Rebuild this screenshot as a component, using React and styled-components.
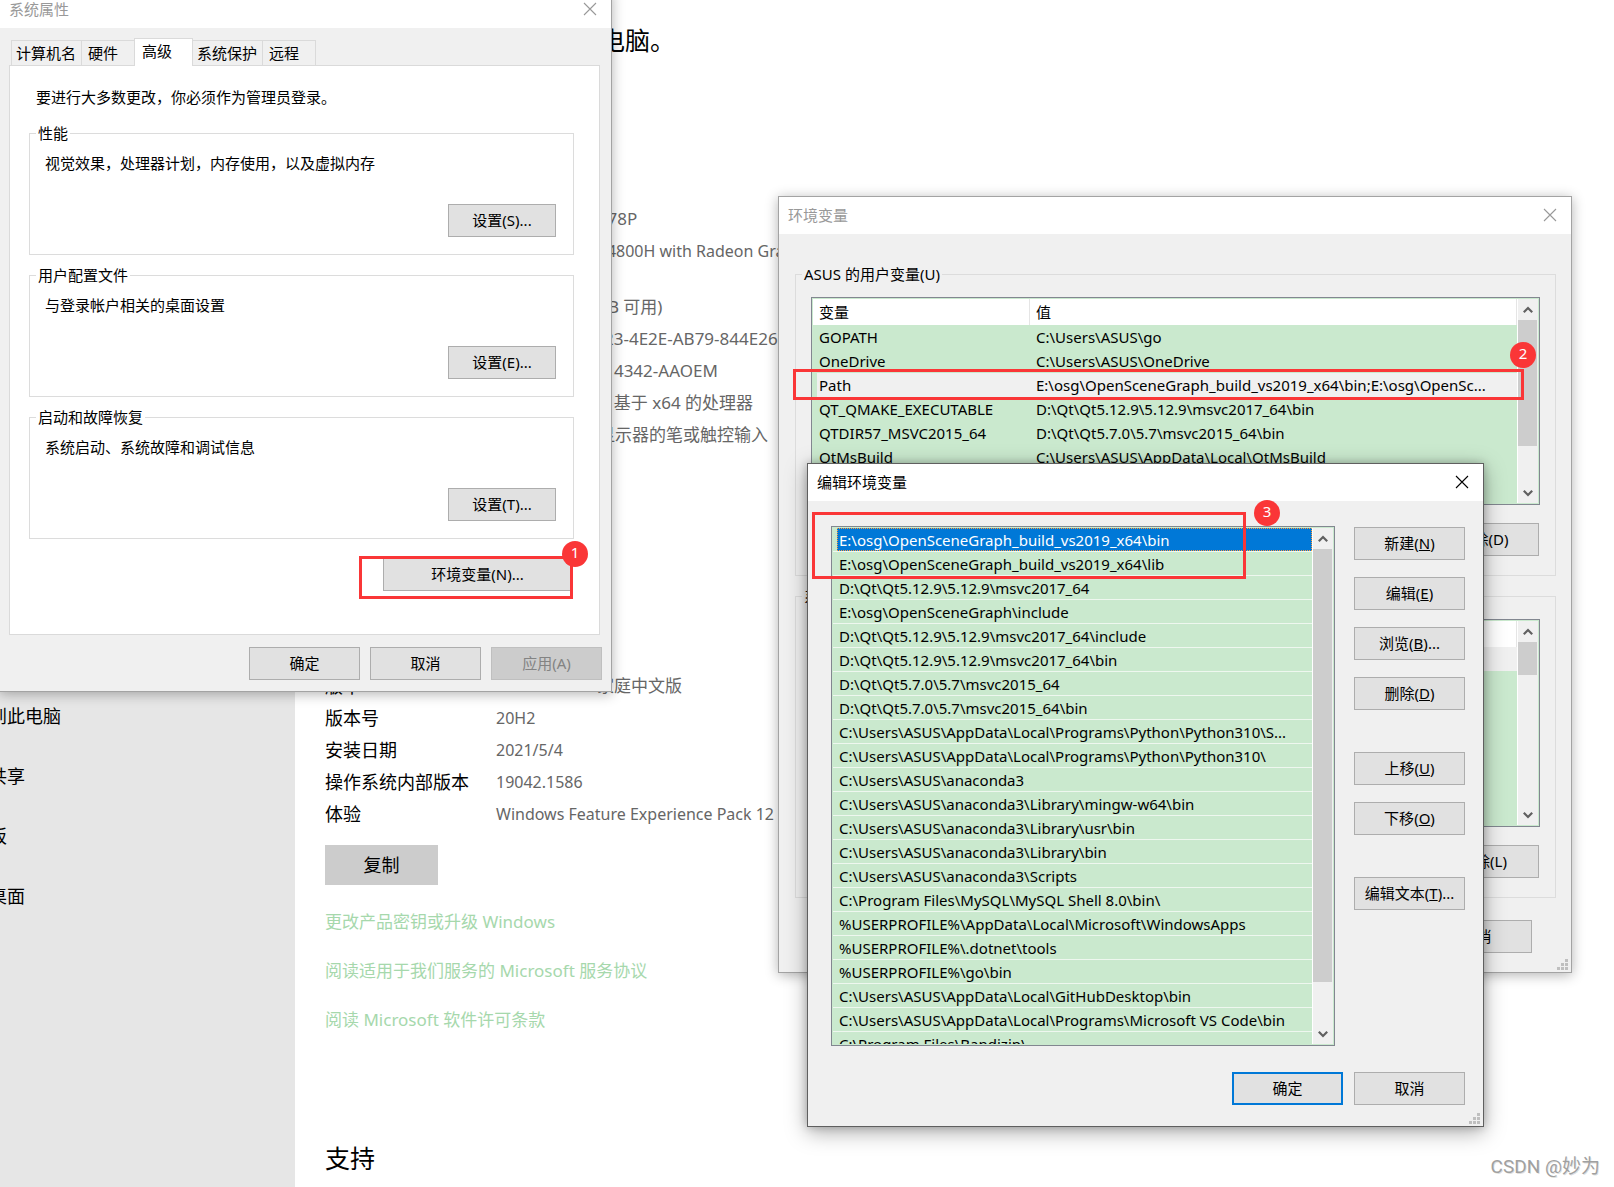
import React from "react";
import styled, { createGlobalStyle, css } from "styled-components";

const GlobalStyle = createGlobalStyle`
  *, *::before, *::after { box-sizing: border-box; }
  body {
    margin: 0;
    background: #ffffff;
    color: #000000;
    font-family: "Noto Sans", "Noto Sans CJK SC", sans-serif;
    font-size: 15px;
    line-height: 20px;
  }
  button { font: inherit; color: inherit; }
  h1, h2, p, dl, dd, dt, ul { margin: 0; padding: 0; font-weight: 400; }
  ul { list-style: none; }
`;

const green = "#cae9ce";
const face = "#f0f0f0";
const red = "#fa3637";

/* ---------- Settings page behind the dialogs ---------- */

const Desktop = styled.div`
  position: relative;
  display: flex;
  min-height: 100vh;
  overflow: hidden;
`;

const Sidebar = styled.nav`
  flex: 0 0 295px;
  padding-top: 704px;
  background: #e6e6e6;
  overflow: hidden;
`;

const NavList = styled.ul`
  display: flex;
  flex-direction: column;
  gap: 36px;
  margin-left: -47px;
`;

const NavLink = styled.a`
  display: block;
  font-size: 18px;
  line-height: 24px;
  color: #000;
  text-decoration: none;
  white-space: nowrap;
`;

const Main = styled.main`
  flex: 1;
  display: flex;
  flex-direction: column;
  align-items: flex-start;
  min-width: 0;
  padding: 24px 30px 10px;
  font-size: 17px;
  line-height: 24px;
`;

const PageTitle = styled.h1`
  font-size: 25px;
  line-height: 32px;
  margin-bottom: 25px;
`;

const SectionTitle = styled.h2`
  font-size: 25px;
  line-height: 32px;
  margin: ${(p) => (p.$far ? "110px 0 0" : "48px 0 22px")};
`;

const Specs = styled.dl`
  display: grid;
  grid-template-columns: 171px 1fr;
  row-gap: 8px;
  white-space: nowrap;

  dt { font-size: 18px; }
`;

const SpecValue = styled.dd`
  color: #666;
  font-size: ${(p) => (p.$latin ? 16 : 17)}px;
`;

const PageButton = styled.button`
  height: 40px;
  min-width: 113px;
  margin-top: ${(p) => (p.$second ? 26 : 19)}px;
  padding: 0 16px;
  border: 0;
  background: #ccc;
  font-size: 18px;
`;

const PageLink = styled.a`
  color: #a6d8ac;
  text-decoration: none;
`;

const LinkStack = styled.div`
  display: flex;
  flex-direction: column;
  gap: 25px;
  margin-top: 25px;
`;

/* ---------- Dialog chrome ---------- */

const Dialog = styled.section`
  position: absolute;
  left: ${(p) => p.$x}px;
  top: ${(p) => p.$y}px;
  width: ${(p) => p.$w}px;
  background: ${face};
  border: 1px solid ${(p) => (p.$active ? "#5f5f5f" : "#a3a3a3")};
  box-shadow: ${(p) =>
    p.$active
      ? "0 5px 20px rgba(0, 0, 0, 0.34), 0 0 8px rgba(0, 0, 0, 0.2)"
      : "0 2px 12px rgba(0, 0, 0, 0.3)"};
`;

const TitleBar = styled.header`
  display: flex;
  align-items: center;
  justify-content: space-between;
  height: 37px;
  padding: 0 14px 2px 9px;
  background: #fff;
  color: ${(p) => (p.$active ? "#000" : "#999")};
`;

const DialogTitle = styled.h2`
  font-size: 15px;
  line-height: 20px;
`;

const CloseButton = styled.button`
  display: flex;
  padding: 0;
  border: 0;
  background: none;
`;

const Button = styled.button`
  width: ${(p) => p.$w || 111}px;
  height: 33px;
  padding: 0 0 2px;
  border: 1px solid #adadad;
  background: #e1e1e1;
  text-align: center;
  white-space: nowrap;
  ${(p) => p.$primary && css`border: 2px solid #0078d7;`}
  &:disabled {
    border-color: #bfbfbf;
    background: #ccc;
    color: #838383;
  }
`;

const Footer = styled.footer`
  display: flex;
  justify-content: flex-end;
  gap: ${(p) => p.$gap || 11}px;
  padding: ${(p) => p.$pad};
`;

const Group = styled.fieldset`
  min-width: 0;
  margin: 0;
  padding: 0;
  border: 1px solid #dcdcdc;

  legend {
    margin-left: 6px;
    padding: 0 2px;
  }
`;

const GripSvg = styled.svg`
  position: absolute;
  right: 3px;
  bottom: 2px;
`;

const Grip = () => (
  <GripSvg width="11" height="11" viewBox="0 0 11 11" fill="#bfbfbf" aria-hidden="true">
    {[[8, 0], [4, 4], [8, 4], [0, 8], [4, 8], [8, 8]].map(([x, y]) => (
      <rect key={`${x}-${y}`} x={x} y={y} width="3" height="3" />
    ))}
  </GripSvg>
);

const Title = ({ text, active }) => (
  <TitleBar $active={active}>
    <DialogTitle>{text}</DialogTitle>
    <CloseButton type="button" aria-label="关闭">
      <svg width="14" height="14" viewBox="0 0 14 14" fill="none" stroke="currentColor" strokeWidth="1.1">
        <path d="M1 1L13 13M13 1L1 13" />
      </svg>
    </CloseButton>
  </TitleBar>
);

/* ---------- System properties ---------- */

const TabBody = styled.div`
  padding: 10px 11px 0 9px;
`;

const TabList = styled.div`
  display: flex;
  align-items: flex-end;
  padding-left: 2px;
`;

const Tab = styled.button`
  height: 25px;
  min-width: 53px;
  padding: 0 5px 0 ${(p) => (p.$short ? 6 : 4)}px;
  border: 1px solid #dadada;
  border-width: 1px 1px 0 0;
  background: ${face};
  text-align: left;

  &:first-child { border-left-width: 1px; }

  &[aria-selected="true"] {
    position: relative;
    height: 28px;
    min-width: 59px;
    margin: 0 0 -1px -1px;
    padding: 0 0 4px 7px;
    border-left-width: 1px;
    background: #fff;
  }
`;

const TabPanel = styled.div`
  display: flex;
  flex-direction: column;
  gap: 10px;
  padding: 21px 25px 43px 19px;
  border: 1px solid #dadada;
  background: #fff;
`;

const Intro = styled.p`
  padding: 0 7px 6px;
`;

const GroupBody = styled.div`
  display: flex;
  flex-direction: column;
  gap: 31px;
  padding: 10px 17px 17px 15px;

  button { align-self: flex-end; }
`;

const EnvRow = styled.div`
  display: flex;
  justify-content: flex-end;
  padding: 9px 2px 0 0;
`;

/* ---------- Lists ---------- */

const ListFrame = styled.div`
  display: flex;
  flex: ${(p) => (p.$grow ? "1" : "none")};
  min-width: 0;
  height: ${(p) => p.$h}px;
  padding: 1px;
  border: 1px solid #828790;
  background: ${green};
  overflow: hidden;
`;

const ScrollTrack = styled.div`
  flex: 0 0 21px;
  display: flex;
  flex-direction: column;
  border-left: 1px solid #fff;
  background: ${face};
`;

const ScrollButton = styled.button`
  display: grid;
  place-items: center;
  flex: 0 0 21px;
  width: 19px;
  padding: 0;
  border: 0;
  background: none;
`;

const Thumb = styled.div`
  width: 19px;
  height: ${(p) => p.$h}px;
  margin-bottom: auto;
  background: #cdcdcd;
`;

const ScrollBar = ({ thumb }) => (
  <ScrollTrack>
    <ScrollButton type="button" aria-label="向上滚动">
      <svg width="10" height="8" viewBox="0 0 10 8" fill="none" stroke="#606060" strokeWidth="2.2">
        <path d="M0.8 6.2L5 2L9.2 6.2" />
      </svg>
    </ScrollButton>
    <Thumb $h={thumb} />
    <ScrollButton type="button" aria-label="向下滚动">
      <svg width="10" height="8" viewBox="0 0 10 8" fill="none" stroke="#606060" strokeWidth="2.2">
        <path d="M0.8 1.8L5 6L9.2 1.8" />
      </svg>
    </ScrollButton>
  </ScrollTrack>
);

const TableClip = styled.div`
  flex: 1;
  min-width: 0;
  overflow: hidden;
`;

const VarTable = styled.table`
  width: 100%;
  table-layout: fixed;
  border-collapse: separate;
  border-spacing: 0;

  th, td {
    height: 24px;
    padding: 0 0 0 6px;
    font-weight: 400;
    text-align: left;
    white-space: nowrap;
    overflow: hidden;
  }
  th {
    height: 26px;
    border-right: 1px solid #e5e5e5;
    background: #fff;
  }
  th:first-child { width: 217px; }
`;

const VarRow = styled.tr`
  ${(p) =>
    p.$selected &&
    css`
      td { background: ${face}; }
      td:first-child { background: linear-gradient(to right, ${green} 4px, ${face} 4px); }
    `}
`;

/* ---------- Environment variables ---------- */

const EnvBody = styled.div`
  display: flex;
  flex-direction: column;
  gap: 10px;
  padding: 30px 15px 0 16px;
`;

const VarGroupBody = styled.div`
  display: flex;
  flex-direction: column;
  gap: 18px;
  padding: 13px 15px 19px;
`;

const ButtonRow = styled.div`
  display: flex;
  justify-content: flex-end;
  gap: 11px;
  padding-right: 1px;
`;

const VariableGroup = ({ legend, rows, selected, thumb, keys }) => (
  <Group>
    <legend>{legend}</legend>
    <VarGroupBody>
      <ListFrame $h={208}>
        <TableClip>
          <VarTable>
            <thead>
              <tr>
                <th scope="col">变量</th>
                <th scope="col">值</th>
              </tr>
            </thead>
            <tbody>
              {rows.map(([name, value]) => (
                <VarRow key={name} $selected={name === selected}>
                  <td>{name}</td>
                  <td>{value}</td>
                </VarRow>
              ))}
            </tbody>
          </VarTable>
        </TableClip>
        <ScrollBar thumb={thumb} />
      </ListFrame>
      <ButtonRow>
        <Button type="button">新建({keys[0]})...</Button>
        <Button type="button">编辑({keys[1]})...</Button>
        <Button type="button">删除({keys[2]})</Button>
      </ButtonRow>
    </VarGroupBody>
  </Group>
);

/* ---------- Edit environment variable ---------- */

const EditBody = styled.div`
  display: flex;
  gap: 19px;
  padding: 25px 18px 0 23px;
`;

const PathList = styled.ul`
  flex: 1;
  min-width: 0;
  overflow: hidden;
`;

const PathItem = styled.li`
  display: flex;
  height: 24px;
  padding-left: 4px;
  border-bottom: 1px solid #eef7ef;
  white-space: nowrap;

  span {
    flex: 1;
    height: 23px;
    padding: 1px 2px 0;
    line-height: 22px;
    ${(p) =>
      p.$selected &&
      css`
        background: #0078d7;
        color: #fff;
        outline: 1px dotted #ff9a3c;
        outline-offset: -1px;
      `}
  }
`;

const SideButtons = styled.div`
  display: flex;
  flex-direction: column;
  gap: 42px;
  padding-top: 1px;
`;

const ButtonStack = styled.div`
  display: flex;
  flex-direction: column;
  gap: 17px;
`;

/* ---------- Annotations ---------- */

const Frame = styled.div`
  position: absolute;
  left: ${(p) => p.$x}px;
  top: ${(p) => p.$y}px;
  width: ${(p) => p.$w}px;
  height: ${(p) => p.$h}px;
  border: 3px solid ${red};
  pointer-events: none;
`;

const Badge = styled.span`
  position: absolute;
  left: ${(p) => p.$x}px;
  top: ${(p) => p.$y}px;
  width: 26px;
  height: 26px;
  border-radius: 50%;
  background: ${red};
  color: #fff;
  line-height: 23px;
  text-align: center;
`;

const Watermark = styled.div`
  position: absolute;
  right: 14px;
  bottom: 8px;
  color: #a0a0a0;
  font-family: Roboto, "Noto Sans CJK SC", sans-serif;
  font-size: 19px;
  line-height: 24px;
  text-shadow: 1px 1px 0 rgba(0, 0, 0, 0.12);
`;

/* ---------- Data ---------- */

const navItems = ["投影到此电脑", "体验共享", "剪贴板", "远程桌面"];

const deviceSpecs = [
  ["设备名称", "LAPTOP-V3KQ78P"],
  ["处理器", <>AMD Ryzen 7&nbsp;&nbsp; 4800H with Radeon Graphics<br />2.90 GHz</>, true],
  ["机带 RAM", "8.00 GB (7.4 GB 可用)"],
  ["设备 ID", "5C1D8A3F-7B23-4E2E-AB79-844E26"],
  ["产品 ID", "00342-35914-14342-AAOEM"],
  ["系统类型", "64 位操作系统, 基于 x64 的处理器"],
  ["笔和触控", "没有可用于此显示器的笔或触控输入"],
];

const windowsSpecs = [
  ["版本", "Windows 10 家庭中文版"],
  ["版本号", "20H2", true],
  ["安装日期", "2021/5/4", true],
  ["操作系统内部版本", "19042.1586", true],
  ["体验", "Windows Feature Experience Pack 12", true],
];

const settingGroups = [
  ["性能", "视觉效果，处理器计划，内存使用，以及虚拟内存", "S"],
  ["用户配置文件", "与登录帐户相关的桌面设置", "E"],
  ["启动和故障恢复", "系统启动、系统故障和调试信息", "T"],
];

const userVars = [
  ["GOPATH", "C:\\Users\\ASUS\\go"],
  ["OneDrive", "C:\\Users\\ASUS\\OneDrive"],
  ["Path", "E:\\osg\\OpenSceneGraph_build_vs2019_x64\\bin;E:\\osg\\OpenSc..."],
  ["QT_QMAKE_EXECUTABLE", "D:\\Qt\\Qt5.12.9\\5.12.9\\msvc2017_64\\bin"],
  ["QTDIR57_MSVC2015_64", "D:\\Qt\\Qt5.7.0\\5.7\\msvc2015_64\\bin"],
  ["QtMsBuild", "C:\\Users\\ASUS\\AppData\\Local\\QtMsBuild"],
];

const systemVars = [["ComSpec", "C:\\WINDOWS\\system32\\cmd.exe"]];

const paths = [
  "E:\\osg\\OpenSceneGraph_build_vs2019_x64\\bin",
  "E:\\osg\\OpenSceneGraph_build_vs2019_x64\\lib",
  "D:\\Qt\\Qt5.12.9\\5.12.9\\msvc2017_64",
  "E:\\osg\\OpenSceneGraph\\include",
  "D:\\Qt\\Qt5.12.9\\5.12.9\\msvc2017_64\\include",
  "D:\\Qt\\Qt5.12.9\\5.12.9\\msvc2017_64\\bin",
  "D:\\Qt\\Qt5.7.0\\5.7\\msvc2015_64",
  "D:\\Qt\\Qt5.7.0\\5.7\\msvc2015_64\\bin",
  "C:\\Users\\ASUS\\AppData\\Local\\Programs\\Python\\Python310\\S...",
  "C:\\Users\\ASUS\\AppData\\Local\\Programs\\Python\\Python310\\",
  "C:\\Users\\ASUS\\anaconda3",
  "C:\\Users\\ASUS\\anaconda3\\Library\\mingw-w64\\bin",
  "C:\\Users\\ASUS\\anaconda3\\Library\\usr\\bin",
  "C:\\Users\\ASUS\\anaconda3\\Library\\bin",
  "C:\\Users\\ASUS\\anaconda3\\Scripts",
  "C:\\Program Files\\MySQL\\MySQL Shell 8.0\\bin\\",
  "%USERPROFILE%\\AppData\\Local\\Microsoft\\WindowsApps",
  "%USERPROFILE%\\.dotnet\\tools",
  "%USERPROFILE%\\go\\bin",
  "C:\\Users\\ASUS\\AppData\\Local\\GitHubDesktop\\bin",
  "C:\\Users\\ASUS\\AppData\\Local\\Programs\\Microsoft VS Code\\bin",
  "C:\\Program Files\\Bandizip\\",
];

const editActions = [
  [["新建", "N"], ["编辑", "E"], ["浏览", "B", "..."], ["删除", "D"]],
  [["上移", "U"], ["下移", "O"]],
  [["编辑文本", "T", "..."]],
];

const SpecList = ({ items }) => (
  <Specs>
    {items.map(([label, value, latin]) => (
      <React.Fragment key={label}>
        <dt>{label}</dt>
        <SpecValue $latin={latin}>{value}</SpecValue>
      </React.Fragment>
    ))}
  </Specs>
);

export default function App() {
  return (
    <>
      <GlobalStyle />
      <Desktop>
        <Sidebar>
          <NavList>
            {navItems.map((item) => (
              <li key={item}><NavLink href="#">{item}</NavLink></li>
            ))}
          </NavList>
        </Sidebar>
        <Main>
          <PageTitle>系统正在监控并保护你的电脑。</PageTitle>
          <PageLink href="#">在 Windows 安全中心中查看详细信息</PageLink>
          <SectionTitle>设备规格</SectionTitle>
          <SpecList items={deviceSpecs} />
          <PageButton type="button">复制</PageButton>
          <PageButton type="button" $second>重命名这台电脑</PageButton>
          <SectionTitle>Windows 规格</SectionTitle>
          <SpecList items={windowsSpecs} />
          <PageButton type="button">复制</PageButton>
          <LinkStack>
            <PageLink href="#">更改产品密钥或升级 Windows</PageLink>
            <PageLink href="#">阅读适用于我们服务的 Microsoft 服务协议</PageLink>
            <PageLink href="#">阅读 Microsoft 软件许可条款</PageLink>
          </LinkStack>
          <SectionTitle $far>支持</SectionTitle>
        </Main>

        <Dialog $x={-1} $y={-10} $w={613} aria-label="系统属性">
          <Title text="系统属性" />
          <TabBody>
            <TabList role="tablist">
              {["计算机名", "硬件", "高级", "系统保护", "远程"].map((name) => (
                <Tab
                  key={name}
                  type="button"
                  role="tab"
                  aria-selected={name === "高级"}
                  $short={name.length === 2}
                >
                  {name}
                </Tab>
              ))}
            </TabList>
            <TabPanel role="tabpanel">
              <Intro>要进行大多数更改，你必须作为管理员登录。</Intro>
              {settingGroups.map(([legend, text, key]) => (
                <Group key={legend}>
                  <legend>{legend}</legend>
                  <GroupBody>
                    <p>{text}</p>
                    <Button type="button" $w={108}>设置({key})...</Button>
                  </GroupBody>
                </Group>
              ))}
              <EnvRow>
                <Button type="button" $w={189}>环境变量(N)...</Button>
              </EnvRow>
            </TabPanel>
          </TabBody>
          <Footer $gap={10} $pad="12px 9px 11px">
            <Button type="button">确定</Button>
            <Button type="button">取消</Button>
            <Button type="button" disabled>应用(A)</Button>
          </Footer>
        </Dialog>

        <Dialog $x={778} $y={196} $w={794} aria-label="环境变量">
          <Title text="环境变量" />
          <EnvBody>
            <VariableGroup legend="ASUS 的用户变量(U)" rows={userVars} selected="Path" thumb={126} keys={["N", "E", "D"]} />
            <VariableGroup legend="系统变量(S)" rows={systemVars} selected="ComSpec" thumb={33} keys={["W", "I", "L"]} />
          </EnvBody>
          <Footer $pad="22px 39px 19px">
            <Button type="button">确定</Button>
            <Button type="button">取消</Button>
          </Footer>
          <Grip />
        </Dialog>

        <Dialog $x={807} $y={463} $w={677} $active aria-label="编辑环境变量">
          <Title text="编辑环境变量" active />
          <EditBody>
            <ListFrame $h={520} $grow>
              <PathList role="listbox" aria-label="路径">
                {paths.map((path, i) => (
                  <PathItem key={path} role="option" aria-selected={i === 0} $selected={i === 0}>
                    <span>{path}</span>
                  </PathItem>
                ))}
              </PathList>
              <ScrollBar thumb={433} />
            </ListFrame>
            <SideButtons>
              {editActions.map((group) => (
                <ButtonStack key={group[0][0]}>
                  {group.map(([label, key, tail]) => (
                    <Button key={label} type="button">
                      {label}(<u>{key}</u>){tail}
                    </Button>
                  ))}
                </ButtonStack>
              ))}
            </SideButtons>
          </EditBody>
          <Footer $pad="26px 18px 21px">
            <Button type="button" $primary>确定</Button>
            <Button type="button">取消</Button>
          </Footer>
          <Grip />
        </Dialog>

        <Frame $x={359} $y={556} $w={214} $h={43} />
        <Badge $x={562} $y={541}>1</Badge>
        <Frame $x={793} $y={369} $w={731} $h={31} />
        <Badge $x={1510} $y={342}>2</Badge>
        <Frame $x={812} $y={512} $w={434} $h={67} />
        <Badge $x={1254} $y={500}>3</Badge>

        <Watermark>CSDN @妙为</Watermark>
      </Desktop>
    </>
  );
}
